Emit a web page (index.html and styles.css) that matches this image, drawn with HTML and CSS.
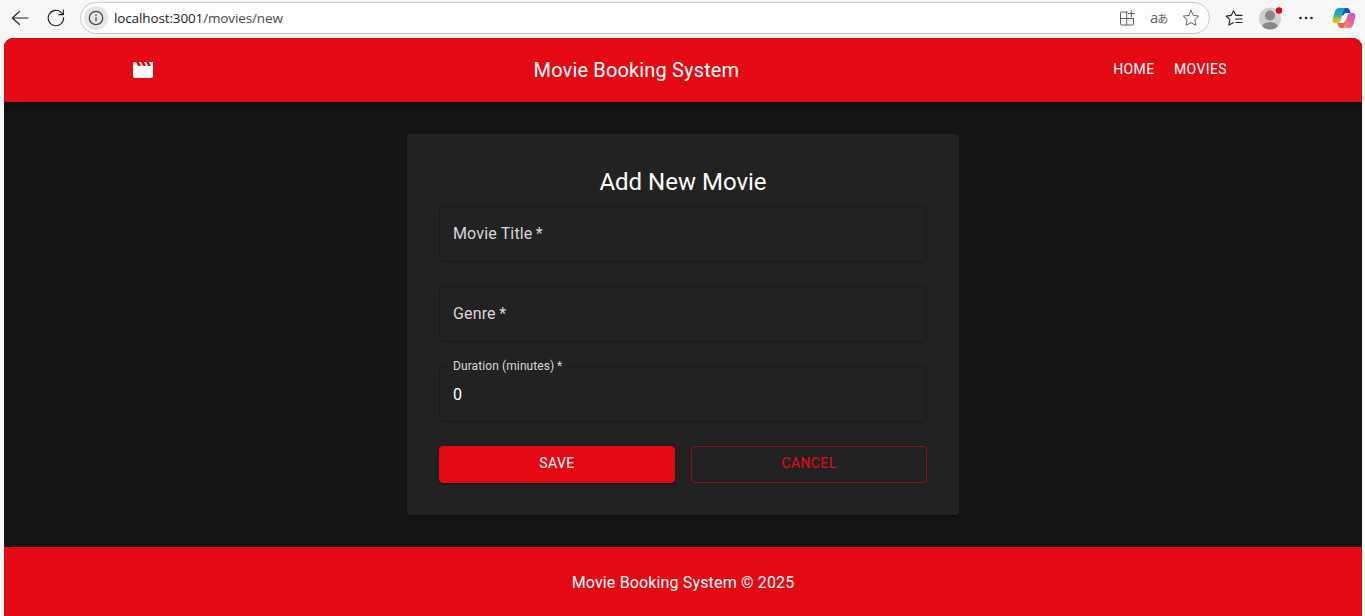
FILE: index.html
```
<!DOCTYPE html>
<html lang="en">
<head>
<meta charset="utf-8">
<title>Movie Booking System</title>
<link rel="stylesheet" href="styles.css">
</head>
<body>
<div class="browser">
  <div class="toolbar">
    <svg class="nav-icon" width="20" height="20" viewBox="0 0 20 20"><path d="M18 10H2.5M9.500 3.500 2.300 10l7.200 6.500"/></svg>
    <svg class="nav-icon reload" width="20" height="20" viewBox="0 0 20 20"><path d="M17.6 9.5A7.7 7.7 0 1 1 15.4 4.600L17.300 6.500M17.400 2v4.600h-4.600"/></svg>
    <div class="address">
      <span class="site-info"><svg width="16" height="16" viewBox="0 0 16 16"><circle cx="8" cy="8" r="6.700"/><path d="M8 7.200v4"/><circle class="dot" cx="8" cy="5.100" r=".8"/></svg></span>
      <span class="url">localhost:3001<span>/movies/new</span></span>
      <svg class="tool apps" width="18" height="18" viewBox="0 0 18 18"><path d="M9 3H3.500Q2.500 3 2.500 4v11q0 1 1 1h11q1 0 1-1V9.500H2.500M8.700 3v13M13.300 1.500v6M10.300 4.500h6"/></svg>
      <span class="translate">a<small>あ</small></span>
      <svg class="tool" width="18" height="18" viewBox="0 0 18 18"><path d="m9 1.500 2.300 4.900 5.400.7-3.900 3.700 1 5.400L9 13.600l-4.800 2.600 1-5.400-3.900-3.700 5.400-.7Z"/></svg>
    </div>
    <svg class="tool dark favorites" width="18" height="18" viewBox="0 0 18 18"><path d="M11 6.400 8.500 1.700 6.200 6.400l-5 .7 3.600 3.600-.9 5.300 4.300-2.300M11 6.400h6M10.500 10H17M11 13.500h6"/></svg>
    <svg class="avatar" width="24" height="24" viewBox="0 0 24 24"><defs><clipPath id="face"><circle cx="11" cy="12.500" r="11"/></clipPath></defs><circle cx="11" cy="12.500" r="11" fill="#d2d0ce"/><g clip-path="url(#face)" fill="#8a8886"><circle cx="11" cy="9.500" r="5"/><ellipse cx="11" cy="21.500" rx="8" ry="5.500"/></g><circle cx="20" cy="4.500" r="3.200" fill="#d60b16"/></svg>
    <svg class="more" width="16" height="6" viewBox="0 0 16 6"><circle cx="2.500" cy="3" r="1.300"/><circle cx="8" cy="3" r="1.300"/><circle cx="13.500" cy="3" r="1.300"/></svg>
    <svg class="copilot" width="24" height="22" viewBox="0 0 24 22">
      <defs>
        <linearGradient id="cool" x1="0" y1="0" x2="0" y2="1"><stop offset="0" stop-color="#1a94e6"/><stop offset=".45" stop-color="#2eafa0"/><stop offset=".75" stop-color="#a9c931"/><stop offset="1" stop-color="#f6bd25"/></linearGradient>
        <linearGradient id="warm" x1="1" y1="0" x2="0" y2="1"><stop offset="0" stop-color="#a45ee8"/><stop offset=".5" stop-color="#ec6299"/><stop offset="1" stop-color="#ff9b48"/></linearGradient>
      </defs>
      <path fill="#174fc1" d="M9 1h6q2 0 2.700 2l1 3h-4.200q-2 0-2.700 2L9 9Z"/>
      <path fill="#f0603c" d="M15 21H9q-2 0-2.700-2l-1-3H9q2 0 2.700-2l3.300-1Z"/>
      <path fill="url(#cool)" d="M7 1h7q-1.500 0-2.200 2L8.700 13q-.8 3-3.700 3H3q-3 0-2.300-4L3 4q1-3 4-3Z"/>
      <path fill="url(#warm)" d="M17 21h-7q1.500 0 2.200-2l3.100-10q.8-3 3.700-3h2q3 0 2.300 4L21 18q-1 3-4 3Z"/>
      <path fill="#fafafa" d="M12.400 7.500q.5-1.500 2-1.500h1.800q-1 1-1.400 2.500L12.600 15q-.5 1-2 1H8q1.200-.8 1.700-2.500Z"/>
    </svg>
  </div>

  <div class="page">
    <header class="app-bar">
      <div class="bar-content">
        <svg class="movie-icon" width="24" height="24" viewBox="0 0 24 24"><path d="m18 4 2 4h-3l-2-4h-2l2 4h-3l-2-4H8l2 4H7L5 4H4c-1.100 0-1.990.9-1.990 2L2 18c0 1.100.9 2 2 2h16c1.100 0 2-.9 2-2V4z"/></svg>
        <div class="brand">Movie Booking System</div>
        <nav class="links"><a>HOME</a><a>MOVIES</a></nav>
      </div>
    </header>
    <main class="main">
      <form class="card">
        <h1 class="heading">Add New Movie</h1>
        <div class="field"><span class="label">Movie Title&thinsp;*</span></div>
        <div class="field"><span class="label">Genre&thinsp;*</span></div>
        <fieldset class="field filled"><legend>Duration (minutes)&thinsp;*</legend><span class="value">0</span></fieldset>
        <div class="actions">
          <button class="button save" type="button">SAVE</button>
          <button class="button cancel" type="button">CANCEL</button>
        </div>
      </form>
    </main>
    <footer class="footer">Movie Booking System © 2025</footer>
  </div>
</div>
</body>
</html>
```
FILE: styles.css
```
* { box-sizing: border-box; }
body { margin: 0; overflow: hidden; background: #f7f7f7; font-family: Roboto, sans-serif; }
svg { display: block; flex: none; }
.browser { height: 616px; display: flex; flex-direction: column; }
.toolbar { height: 38px; flex: none; display: flex; align-items: center; padding: 0 9px 2px 10px; }
.nav-icon, .tool { fill: none; stroke: #242424; stroke-width: 1.1; stroke-linejoin: round; stroke-linecap: round; }
.reload { margin-left: 16px; }
.address { width: 1130px; height: 32px; margin-left: 14px; flex: none; display: flex; align-items: center; border: 1px solid #c9c9c9; border-radius: 16px; background: #fdfdfd; padding: 0 9px 0 3px; }
.site-info { width: 24px; height: 24px; border-radius: 50%; background: #e6e6e6; display: grid; place-items: center; }
.site-info svg { fill: none; stroke: #444; stroke-width: 1.2; }
.site-info .dot { fill: #444; stroke: none; }
.url { flex: 1; margin-left: 6px; font: 13.5px/20px "Open Sans", sans-serif; letter-spacing: -0.130px; color: #1c1c1c; }
.url span { color: #4a4a4a; }
.address .tool { stroke: #606060; stroke-width: 1; }
.translate { width: 20px; margin: 0 12px 0 14px; font: 15px/18px "Open Sans", "Noto Sans CJK JP", sans-serif; color: #606060; white-space: nowrap; padding-bottom: 2px; }
.translate small { font: 11px/10px "Noto Sans CJK JP", sans-serif; margin-left: -1px; }
.favorites { margin-left: 15px; }
.avatar { margin-left: 16px; }
.more { margin-left: 15px; fill: #242424; }
.copilot { margin-left: auto; }
.page { flex: 1; margin: 0 3px 0 4px; display: flex; flex-direction: column; overflow: hidden; border-radius: 9px 9px 0 0; background: #141414; color: #fff; }
.app-bar { height: 64px; flex: none; background: #e50914; box-shadow: 0 2px 4px -1px rgba(0,0,0,.2), 0 4px 5px rgba(0,0,0,.14), 0 1px 10px rgba(0,0,0,.12); }
.bar-content { width: 1104px; height: 64px; margin: 0 auto; display: flex; align-items: center; }
.movie-icon { margin-right: 16px; fill: #fff; }
.brand { flex: 1; text-align: center; font-size: 20px; line-height: 32px; letter-spacing: .15px; }
.links { display: flex; padding-bottom: 1px; }
.links a { min-width: 64px; padding: 6px 8px; text-align: center; font-size: 14px; line-height: 24.5px; font-weight: 450; letter-spacing: .4px; }
.main { height: 445px; flex: none; padding-top: 32px; }
.card { width: 552px; height: 381px; margin: 0 auto; padding: 32px; border-radius: 4px; background: #222; box-shadow: 0 2px 1px -1px rgba(0,0,0,.2), 0 1px 1px rgba(0,0,0,.14), 0 1px 3px rgba(0,0,0,.12); }
.heading { margin: 0 0 8px; font-size: 24px; line-height: 32px; font-weight: 400; text-align: center; }
.field { height: 56px; margin: 0 0 24px; border: 1px solid #1a1a1a; border-radius: 4px; padding: 0 13px; display: flex; align-items: center; font-size: 16px; line-height: 23px; letter-spacing: .15px; color: #d8d8d8; }
.label { padding-bottom: 1px; }
.filled { display: block; height: 63px; margin-top: -7px; padding: 0 8px; }
.filled legend { height: 14px; padding: 0 5px; font-size: 12px; line-height: 14px; letter-spacing: .1px; }
.value { display: block; padding: 10px 5px 0; color: #fff; }
.actions { display: grid; grid-template-columns: 1fr 1fr; gap: 16px; }
.button { height: 37px; padding: 0 0 3px; border: 1px solid transparent; border-radius: 4px; font: 450 14px/24px Roboto, sans-serif; letter-spacing: .4px; }
.save { background: #e50914; border-color: #e50914; color: #fff; box-shadow: 0 3px 1px -2px rgba(0,0,0,.2), 0 2px 2px rgba(0,0,0,.14), 0 1px 5px rgba(0,0,0,.12); }
.cancel { background: transparent; color: #e50914; border-color: rgba(229,9,20,.5); }
.footer { flex: 1; background: #e50914; padding-top: 24px; text-align: center; font-size: 16px; line-height: 24px; letter-spacing: .15px; }
```
